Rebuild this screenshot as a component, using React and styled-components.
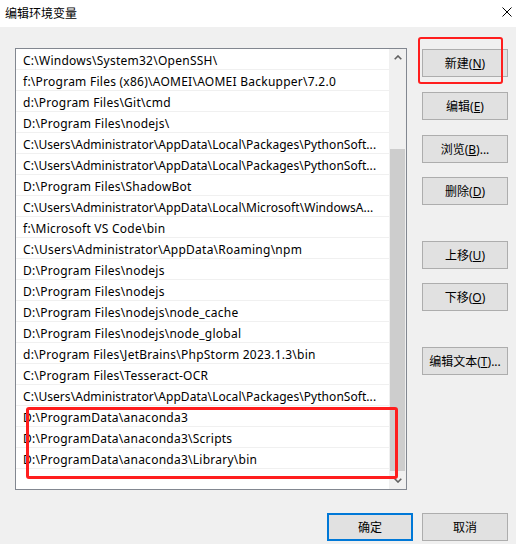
import React from "react";
import styled, { createGlobalStyle } from "styled-components";

const Global = createGlobalStyle`
  html, body { margin: 0; padding: 0; background: #f0f0f0; }
  body { font-family: "Noto Sans", "Noto Sans CJK SC", sans-serif; font-size: 12px; color: #000; }
`;

const Window = styled.div`
  position: relative;
  width: 516px;
  height: 544px;
  background: #f0f0f0;
  overflow: hidden;
  display: flex;
  flex-direction: column;
`;

const TitleBar = styled.div`
  height: 27px;
  background: #fff;
  display: flex;
  align-items: center;
  justify-content: space-between;
  padding: 0 4px 0 5px;
  box-sizing: border-box;
`;

const Title = styled.span`
  font-family: "Noto Sans CJK SC", sans-serif;
  font-size: 12px;
  line-height: 1;
  margin-top: -2px;
`;

const CloseBtn = styled.div`
  width: 10px;
  height: 10px;
  display: flex;
  margin-top: -3px;
`;

const Body = styled.div`
  display: flex;
  padding: 21px 8px 0 15px;
`;

const ListBox = styled.div`
  width: 392px;
  height: 442px;
  box-sizing: border-box;
  border: 1px solid #828790;
  background: #fff;
  display: flex;
`;

const Rows = styled.div`
  width: 373px;
  display: flex;
  flex-direction: column;
`;

const Row = styled.div`
  height: 21px;
  line-height: 23px;
  box-sizing: border-box;
  border-bottom: 1px solid #f0f0f0;
  padding: 0 0 0 7px;
  white-space: nowrap;
  overflow: hidden;
  font-size: 12px;
  letter-spacing: ${(p) => (p.$clipped ? "0.05px" : "0.25px")};
`;

const ScrollBar = styled.div`
  width: 17px;
  background: #f0f0f0;
  display: flex;
  flex-direction: column;
`;

const ArrowBtn = styled.div`
  height: ${(p) => p.$h}px;
  display: flex;
  align-items: center;
  justify-content: center;
`;

const Track = styled.div`
  flex: 1;
  display: flex;
  flex-direction: column;
  justify-content: flex-end;
  align-items: center;
`;

const Thumb = styled.div`
  width: 15px;
  height: 322px;
  background: #cdcdcd;
`;

const ButtonColumn = styled.div`
  margin-left: 15px;
  padding-top: 1px;
  display: flex;
  flex-direction: column;
`;

const Button = styled.button`
  width: 86px;
  height: 28px;
  box-sizing: border-box;
  margin: 0;
  margin-top: ${(p) => p.$mt || 0}px;
  padding: 0;
  background: #e1e1e1;
  border: ${(p) => (p.$default ? "2px solid #0078d7" : "1px solid #adadad")};
  font-family: "Noto Sans", "Noto Sans CJK SC", sans-serif;
  font-size: 12px;
  color: #000;
  display: flex;
  align-items: center;
  justify-content: center;
  white-space: nowrap;
`;

const Footer = styled.div`
  display: flex;
  justify-content: flex-end;
  gap: 9px;
  padding: 23px 8px 0 0;
`;

const Highlight = styled.div`
  position: absolute;
  left: ${(p) => p.$x}px;
  top: ${(p) => p.$y}px;
  width: ${(p) => p.$w}px;
  height: ${(p) => p.$h}px;
  box-sizing: border-box;
  border: ${(p) => p.$b}px solid #ff1e1e;
  border-radius: 3px;
  pointer-events: none;
`;

const PY = "C:\\Users\\Administrator\\AppData\\Local\\Packages\\PythonSoft...";

const paths = [
  "C:\\Windows\\System32\\OpenSSH\\",
  "f:\\Program Files (x86)\\AOMEI\\AOMEI Backupper\\7.2.0",
  "d:\\Program Files\\Git\\cmd",
  "D:\\Program Files\\nodejs\\",
  PY,
  PY,
  "D:\\Program Files\\ShadowBot",
  "C:\\Users\\Administrator\\AppData\\Local\\Microsoft\\WindowsA...",
  "f:\\Microsoft VS Code\\bin",
  "C:\\Users\\Administrator\\AppData\\Roaming\\npm",
  "D:\\Program Files\\nodejs",
  "D:\\Program Files\\nodejs",
  "D:\\Program Files\\nodejs\\node_cache",
  "D:\\Program Files\\nodejs\\node_global",
  "d:\\Program Files\\JetBrains\\PhpStorm 2023.1.3\\bin",
  "C:\\Program Files\\Tesseract-OCR",
  PY,
  "D:\\ProgramData\\anaconda3",
  "D:\\ProgramData\\anaconda3\\Scripts",
  "D:\\ProgramData\\anaconda3\\Library\\bin",
];

const Chevron = ({ up }) => (
  <svg width="8" height="5" viewBox="0 0 8 5">
    <path
      d={up ? "M0.7 4.3 L4 1 L7.3 4.3" : "M0.7 0.7 L4 4 L7.3 0.7"}
      fill="none"
      stroke="#606060"
      strokeWidth="1.6"
    />
  </svg>
);

const Label = ({ text, k, suffix = "" }) => (
  <span>
    {text}(<u>{k}</u>){suffix}
  </span>
);

export default function App() {
  return (
    <>
      <Global />
      <Window>
        <TitleBar>
          <Title>编辑环境变量</Title>
          <CloseBtn>
            <svg width="10" height="10" viewBox="0 0 10 10">
              <path d="M0.5 0.5 L9.5 9.5 M9.5 0.5 L0.5 9.5" stroke="#000" strokeWidth="1" />
            </svg>
          </CloseBtn>
        </TitleBar>
        <Body>
          <ListBox>
            <Rows>
              {paths.map((p, i) => (
                <Row key={i} $clipped={p.endsWith("...")}>
                  {p}
                </Row>
              ))}
            </Rows>
            <ScrollBar>
              <ArrowBtn $h={17}>
                <Chevron up />
              </ArrowBtn>
              <Track>
                <Thumb />
              </Track>
              <ArrowBtn $h={18}>
                <Chevron />
              </ArrowBtn>
            </ScrollBar>
          </ListBox>
          <ButtonColumn>
            <Button><Label text="新建" k="N" /></Button>
            <Button $mt={15}><Label text="编辑" k="E" /></Button>
            <Button $mt={15}><Label text="浏览" k="B" suffix="..." /></Button>
            <Button $mt={14}><Label text="删除" k="D" /></Button>
            <Button $mt={36}><Label text="上移" k="U" /></Button>
            <Button $mt={14}><Label text="下移" k="O" /></Button>
            <Button $mt={36}><Label text="编辑文本" k="T" suffix="..." /></Button>
          </ButtonColumn>
        </Body>
        <Footer>
          <Button $default>确定</Button>
          <Button>取消</Button>
        </Footer>
        <Highlight $x={418} $y={37} $w={85} $h={47} $b={2} />
        <Highlight $x={26} $y={407} $w={372} $h={72} $b={3} />
      </Window>
    </>
  );
}
